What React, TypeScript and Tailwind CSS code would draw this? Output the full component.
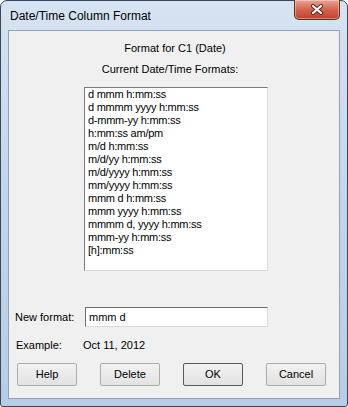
import React from 'react';

const formats = [
  'd mmm h:mm:ss',
  'd mmmm yyyy h:mm:ss',
  'd-mmm-yy h:mm:ss',
  'h:mm:ss am/pm',
  'm/d h:mm:ss',
  'm/d/yy h:mm:ss',
  'm/d/yyyy h:mm:ss',
  'mm/yyyy h:mm:ss',
  'mmm d h:mm:ss',
  'mmm yyyy h:mm:ss',
  'mmmm d, yyyy h:mm:ss',
  'mmm-yy h:mm:ss',
  '[h]:mm:ss',
];

function CloseButton() {
  return (
    <div className="absolute top-[-1px] right-[7px] w-[46px] h-[20px] rounded-b-[5px] border border-t-0 border-[#6b2a20] bg-gradient-to-b from-[#e8a595] via-[#d2634d] to-[#c2402b] flex items-center justify-center shadow-[inset_0_0_0_1px_rgba(255,255,255,0.35)]">
      <svg width="14" height="11" viewBox="0 0 14 11">
        <path d="M3 2 L11 9 M11 2 L3 9" stroke="#5a1f18" strokeWidth="4" strokeLinecap="round" />
        <path d="M3 2 L11 9 M11 2 L3 9" stroke="#ffffff" strokeWidth="2.2" strokeLinecap="round" />
      </svg>
    </div>
  );
}

function WinButton({ label, primary }: { label: string; primary?: boolean }) {
  return (
    <button
      className={
        'w-[60px] h-[23px] rounded-[2px] bg-gradient-to-b from-[#f2f2f2] to-[#e2e2e2] text-[11px] text-black flex items-center justify-center ' +
        (primary ? 'border border-[#5a5a5a]' : 'border border-[#acacac]')
      }
    >
      {label}
    </button>
  );
}

export default function App() {
  return (
    <div
      className="w-[348px] h-[407px] relative rounded-t-[7px] rounded-b-[3px] border border-[#3a4758] bg-gradient-to-b from-[#d6e3f2] via-[#c2d5eb] to-[#b7cce6] flex flex-col"
      style={{ fontFamily: '"Liberation Sans", Arial, sans-serif' }}
    >
      {/* Title bar */}
      <div className="h-[29px] pl-[9px] flex items-center text-[12px] text-black">
        Date/Time Column Format
      </div>
      <CloseButton />

      {/* Client area */}
      <div className="mx-[7px] mb-[7px] flex-1 border border-[#8fa2ba] bg-[#f0f0f0] flex flex-col text-[11px] text-black">
        <div className="mt-[10px] h-[15px] leading-[15px] text-center pl-[2px]">Format for C1 (Date)</div>
        <div className="mt-[6px] h-[15px] leading-[15px] text-center pr-[8px]">Current Date/Time Formats:</div>

        {/* Formats list */}
        <div className="mt-[10px] ml-[75px] w-[184px] h-[184px] bg-white border border-t-[#7a7a7a] border-l-[#7a7a7a] border-r-[#dadada] border-b-[#dadada] pl-[3px] tracking-[-0.25px]">
          {formats.map((f) => (
            <div key={f} className="h-[13px] leading-[13px] whitespace-nowrap">
              {f}
            </div>
          ))}
        </div>

        <div className="mt-[36px] flex items-center">
          <span className="ml-[6px] w-[70px]">New format:</span>
          <div className="w-[183px] h-[20px] bg-white border border-t-[#6e6e6e] border-l-[#6e6e6e] border-r-[#dadada] border-b-[#dadada] flex items-center pl-[3px]">
            mmm d
          </div>
        </div>

        <div className="mt-[11px] h-[15px] leading-[15px] flex">
          <span className="ml-[7px] w-[67px]">Example:</span>
          <span>Oct 11, 2012</span>
        </div>

        <div className="mt-[10px] ml-[8px] flex gap-[23px]">
          <WinButton label="Help" />
          <WinButton label="Delete" />
          <WinButton label="OK" primary />
          <WinButton label="Cancel" />
        </div>
      </div>
    </div>
  );
}
